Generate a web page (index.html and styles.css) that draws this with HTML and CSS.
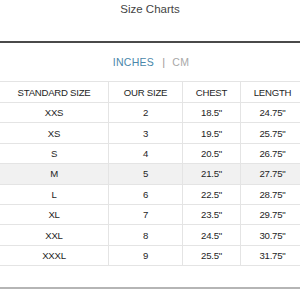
FILE: index.html
```html
<!DOCTYPE html>
<html>
<head>
<meta charset="utf-8">
<link rel="stylesheet" href="styles.css">
</head>
<body>
<div class="page">
  <header class="title">Size Charts</header>
  <section class="panel">
    <div class="tabs">
      <span class="tab active">INCHES</span>
      <span class="sep">|</span>
      <span class="tab">CM</span>
    </div>
    <table class="chart">
      <thead>
        <tr><th>STANDARD SIZE</th><th>OUR SIZE</th><th>CHEST</th><th>LENGTH</th></tr>
      </thead>
      <tbody>
        <tr><td>XXS</td><td>2</td><td>18.5"</td><td>24.75"</td></tr>
        <tr><td>XS</td><td>3</td><td>19.5"</td><td>25.75"</td></tr>
        <tr><td>S</td><td>4</td><td>20.5"</td><td>26.75"</td></tr>
        <tr class="hl"><td>M</td><td>5</td><td>21.5"</td><td>27.75"</td></tr>
        <tr><td>L</td><td>6</td><td>22.5"</td><td>28.75"</td></tr>
        <tr><td>XL</td><td>7</td><td>23.5"</td><td>29.75"</td></tr>
        <tr><td>XXL</td><td>8</td><td>24.5"</td><td>30.75"</td></tr>
        <tr><td>XXXL</td><td>9</td><td>25.5"</td><td>31.75"</td></tr>
      </tbody>
    </table>
  </section>
</div>
</body>
</html>
```
FILE: styles.css
```css
html, body {
  margin: 0;
  padding: 0;
  background: #fff;
}
body {
  font-family: "Liberation Sans", Arial, sans-serif;
  color: #222;
  width: 300px;
  height: 300px;
  overflow: hidden;
}
.page {
  display: flex;
  flex-direction: column;
}
.title {
  height: 41px;
  box-sizing: border-box;
  padding-top: 3px;
  text-align: center;
  font-size: 11.5px;
  color: #444;
}
.panel {
  border-top: 2px solid #4a4a4a;
  border-bottom: 2px solid #b5b5b5;
  height: 248px;
  box-sizing: border-box;
}
.tabs {
  height: 38px;
  display: flex;
  justify-content: center;
  align-items: center;
  font-size: 10.5px;
  letter-spacing: 0.3px;
  padding-left: 2px;
}
.tab {
  color: #a8a8a8;
}
.tab.active {
  color: #4a87aa;
}
.sep {
  color: #999;
  margin: 0 7px 0 8px;
  font-size: 11px;
}
.chart {
  width: 304px;
  border-collapse: collapse;
  table-layout: fixed;
  font-size: 9.6px;
  letter-spacing: -0.25px;
}
.chart th, .chart td {
  border-top: 1px solid #e4e4e4;
  border-bottom: 1px solid #e4e4e4;
  border-left: 1px solid #e4e4e4;
  text-align: center;
  padding: 0;
  font-weight: normal;
  color: #1e1e1e;
}
.chart th:first-child, .chart td:first-child {
  border-left: none;
  width: 108px;
}
.chart th:nth-child(2) { width: 73px; }
.chart th:nth-child(3) { width: 57px; }
.chart th {
  height: 20px;
}
.chart td {
  height: 19.4px;
}
.chart tr.hl td {
  background: #f1f1f1;
}
```
